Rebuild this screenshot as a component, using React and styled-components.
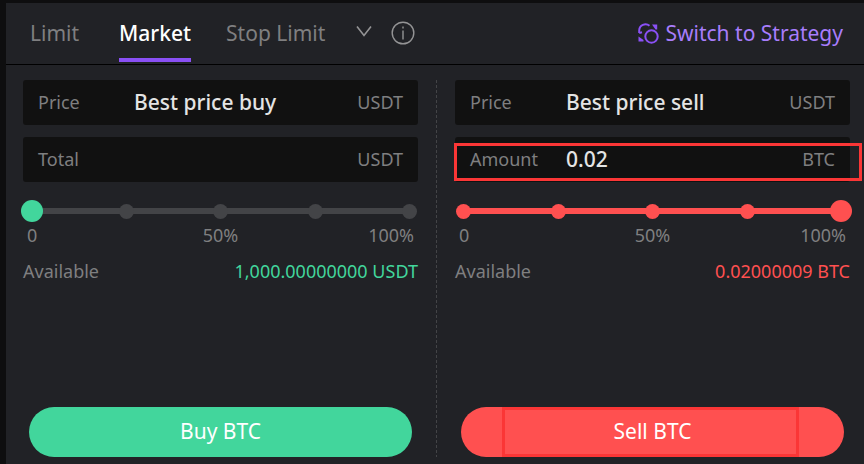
import React, { useState } from 'react';
import styled, { createGlobalStyle, ThemeProvider } from 'styled-components';

const THEME = {
    colors: {
        page: '#0e0e0f',
        panel: '#212226',
        field: '#111111',
        line: '#000000',
        track: '#434447',
        muted: '#7f7f80',
        text: '#e4e4e4',
        white: '#ffffff',
        purple: '#8a50f5',
        link: '#a87dfc',
        buy: '#42d69c',
        sell: '#ff5050',
        mark: '#fb3636',
    },
};

const GlobalStyle = createGlobalStyle`
    * {
        box-sizing: border-box;
    }

    html, body, #root {
        height: 100%;
    }

    body {
        margin: 0;
        background-color: ${THEME.colors.page};
        font-family: "Noto Sans", "Open Sans", sans-serif;
    }

    button, input {
        font-family: inherit;
    }
`;

const Panel = styled.main`
    display: flex;
    flex-direction: column;
    min-height: 100%;
    margin-left: 6px;
    border-top: 3px solid ${({ theme }) => theme.colors.page};
    background-color: ${({ theme }) => theme.colors.panel};
`;

const Header = styled.header`
    display: flex;
    justify-content: space-between;
    height: 62px;
    padding: 0 21px 0 24px;
    border-bottom: 1px solid ${({ theme }) => theme.colors.line};
`;

const Tabs = styled.nav`
    display: flex;
`;

const Tab = styled.button`
    height: 59px;
    margin-right: ${({ $gap }) => $gap}px;
    padding: 4px 0 0;
    border: 0;
    border-bottom: 4px solid ${({ $active, theme }) => ($active ? theme.colors.purple : 'transparent')};
    background: none;
    color: ${({ $active, theme }) => ($active ? theme.colors.white : theme.colors.muted)};
    font-size: 21px;
    font-weight: ${({ $active }) => ($active ? 500 : 400)};
    line-height: 28px;
    cursor: pointer;
`;

const IconButton = styled.button`
    display: flex;
    align-items: center;
    margin-right: 19px;
    padding: 0 0 2px;
    border: 0;
    background: none;
    color: #949495;
    cursor: pointer;
`;

const StrategyLink = styled.a`
    display: flex;
    align-items: center;
    gap: 7px;
    padding-bottom: 1px;
    color: ${({ theme }) => theme.colors.link};
    font-size: 21px;
    line-height: 28px;
    text-decoration: none;

    svg {
        color: ${({ theme }) => theme.colors.purple};
    }
`;

const Forms = styled.div`
    display: grid;
    flex: 1;
    grid-template-columns: 1fr 1px 1fr;
    gap: 18px;
    padding: 15px 14px 7px 17px;
`;

const Divider = styled.div`
    background: repeating-linear-gradient(to bottom, #434447 0 3px, transparent 3px 5px);
`;

const Form = styled.form`
    display: flex;
    flex-direction: column;
    min-width: 0;
`;

const FieldBox = styled.div`
    position: relative;
    display: flex;
    align-items: center;
    height: 45px;
    margin-bottom: 12px;
    padding: 0 15px 2px;
    border-radius: 3px;
    background-color: ${({ theme }) => theme.colors.field};
    color: ${({ theme }) => theme.colors.muted};
    font-size: 18px;
    line-height: 24px;

    label {
        flex: 0 0 96px;
    }

    input {
        flex: 1;
        min-width: 0;
        padding: 0;
        border: 0;
        outline: 0;
        background: none;
        color: ${({ theme }) => theme.colors.text};
        font-size: 21px;
        font-weight: 500;
        line-height: 28px;
    }
`;

const FieldMark = styled.span`
    position: absolute;
    inset: 6px -12px 1px -1px;
    border: 3px solid ${({ theme }) => theme.colors.mark};
    pointer-events: none;
`;

const SliderBox = styled.div`
    position: relative;
    display: flex;
    align-items: center;
    justify-content: space-between;
    height: 22px;
    margin-top: 6px;
    padding: 0 1px;
    background: linear-gradient(${({ $color }) => $color}, ${({ $color }) => $color}) center / calc(100% - 18px) 6px no-repeat;

    input {
        position: absolute;
        inset: 0 -2px;
        width: calc(100% + 4px);
        height: 22px;
        margin: 0;
        appearance: none;
        background: none;
        cursor: pointer;
    }

    input::-webkit-slider-thumb {
        width: 22px;
        height: 22px;
        border: 0;
        border-radius: 50%;
        appearance: none;
        background-color: ${({ $thumb }) => $thumb};
    }
`;

const Dot = styled.span`
    width: 15px;
    height: 15px;
    border-radius: 50%;
    background-color: ${({ $color }) => $color};
`;

const Scale = styled.div`
    display: grid;
    grid-template-columns: 1fr auto 1fr;
    margin-top: 1px;
    padding: 0 4px;
    color: ${({ theme }) => theme.colors.muted};
    font-size: 18px;
    line-height: 24px;

    span:last-child {
        text-align: right;
    }
`;

const Available = styled.div`
    display: flex;
    justify-content: space-between;
    margin-top: 12px;
    color: ${({ theme }) => theme.colors.muted};
    font-size: 18px;
    line-height: 24px;

    output {
        color: ${({ $color }) => $color};
    }
`;

const Submit = styled.button`
    position: relative;
    height: 50px;
    margin: auto 6px 0;
    padding: 0 0 2px;
    border: 0;
    border-radius: 25px;
    background-color: ${({ $color }) => $color};
    color: ${({ theme }) => theme.colors.white};
    font-size: 21px;
    line-height: 28px;
    cursor: pointer;
`;

const SubmitMark = styled.span`
    position: absolute;
    inset: 0 45px 0 41px;
    border: 3px solid ${({ theme }) => theme.colors.mark};
`;

const ChevronIcon = () => (
    <svg width="16" height="16" viewBox="0 0 16 16" fill="none" stroke="currentColor" strokeWidth="1.6">
        <path d="M1 1.500 L8 10.500 L15 1.500" />
    </svg>
);

const InfoIcon = () => (
    <svg width="24" height="24" viewBox="0 0 24 24" fill="none" stroke="currentColor" strokeWidth="1.4">
        <circle cx="12" cy="12" r="10.8" />
        <path d="M12 9.500 V18.500 M12 5.500 V7.500" />
    </svg>
);

const StrategyIcon = () => (
    <svg width="21" height="21" viewBox="0 0 21 21" fill="none" stroke="currentColor" strokeWidth="2">
        <circle cx="13.5" cy="13.5" r="6.2" />
        <path d="M1.200 10 V7.500 A6.300 6.300 0 0 1 11.500 2.800" />
        <path d="M1.200 10 L4 9.200" />
        <path d="M14 1.500 H19.200 V6.500 H17.500 Z M0.500 13.500 L5.500 17 V18.500 H0.500 Z" fill="currentColor" stroke="none" />
    </svg>
);

const Field = ({ id, label, unit, marked, ...rest }) => (
    <FieldBox>
        <label htmlFor={id}>{label}</label>
        <input id={id} type="text" {...rest} />
        <span>{unit}</span>
        {marked && <FieldMark />}
    </FieldBox>
);

const Slider = ({ name, color, start }) => {
    const [value, setValue] = useState(start);
    const stops = [0, 25, 50, 75, 100];
    const rail = value > 0 ? color : THEME.colors.track;

    return (
        <>
            <SliderBox $color={rail} $thumb={color}>
                {stops.map(stop => <Dot key={stop} $color={rail} />)}
                <input
                    type="range"
                    min="0"
                    max="100"
                    step="25"
                    aria-label={name}
                    value={value}
                    onChange={e => setValue(Number(e.target.value))}
                />
            </SliderBox>
            <Scale>
                <span>0</span>
                <span>50%</span>
                <span>100%</span>
            </Scale>
        </>
    );
};

const App = () => {
    const { buy, sell } = THEME.colors;

    return (
        <ThemeProvider theme={THEME}>
            <GlobalStyle />
            <Panel>
                <Header>
                    <Tabs>
                        <Tab type="button" $gap={40}>Limit</Tab>
                        <Tab type="button" $gap={35} $active>Market</Tab>
                        <Tab type="button" $gap={31}>Stop Limit</Tab>
                        <IconButton type="button" aria-label="More order types"><ChevronIcon /></IconButton>
                        <IconButton type="button" aria-label="Order type info"><InfoIcon /></IconButton>
                    </Tabs>
                    <StrategyLink href="#strategy">
                        <StrategyIcon />
                        Switch to Strategy
                    </StrategyLink>
                </Header>

                <Forms>
                    {/* buy side */}
                    <Form onSubmit={e => e.preventDefault()}>
                        <Field id="buy-price" label="Price" unit="USDT" defaultValue="Best price buy" readOnly />
                        <Field id="buy-total" label="Total" unit="USDT" defaultValue="" />
                        <Slider name="Buy percentage" color={buy} start={0} />
                        <Available $color={buy}>
                            <span>Available</span>
                            <output>1,000.00000000 USDT</output>
                        </Available>
                        <Submit type="submit" $color={buy}>Buy BTC</Submit>
                    </Form>

                    <Divider />

                    {/* sell side */}
                    <Form onSubmit={e => e.preventDefault()}>
                        <Field id="sell-price" label="Price" unit="USDT" defaultValue="Best price sell" readOnly />
                        <Field id="sell-amount" label="Amount" unit="BTC" defaultValue="0.02" marked />
                        <Slider name="Sell percentage" color={sell} start={100} />
                        <Available $color={sell}>
                            <span>Available</span>
                            <output>0.02000009 BTC</output>
                        </Available>
                        <Submit type="submit" $color={sell}>
                            <SubmitMark />
                            Sell BTC
                        </Submit>
                    </Form>
                </Forms>
            </Panel>
        </ThemeProvider>
    );
};

export default App;
